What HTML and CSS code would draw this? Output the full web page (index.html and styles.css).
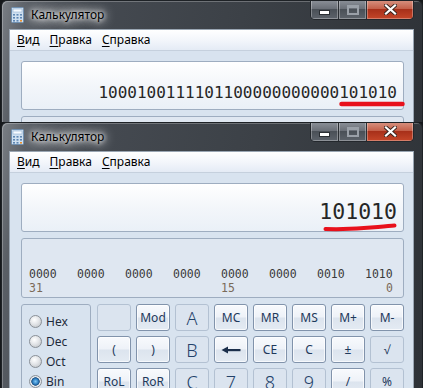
FILE: index.html
```html
<!DOCTYPE html>
<html lang="ru">
<head>
  <meta charset="UTF-8" />
  <title>Калькулятор</title>
  <link rel="stylesheet" href="styles.css">
</head>
<body>
  <div class="screen">
    <!-- back window: long binary value -->
    <div class="window window-back">
      <div class="titlebar">
        <svg class="app-icon" width="13" height="16" viewBox="0 0 13 16">
          <rect x="0.5" y="0.5" width="12" height="15" rx="1" fill="#cfe0f0" stroke="#6f8fb0"/>
          <rect x="2" y="2" width="9" height="3" fill="#f7fbff" stroke="#8fb0cf" stroke-width="0.6"/>
          <g fill="#5d86b3">
            <rect x="2" y="7" width="2" height="1.6"/><rect x="5.5" y="7" width="2" height="1.6"/><rect x="9" y="7" width="2" height="1.6"/>
            <rect x="2" y="10" width="2" height="1.6"/><rect x="5.5" y="10" width="2" height="1.6"/><rect x="9" y="10" width="2" height="1.6"/>
            <rect x="2" y="13" width="2" height="1.6"/><rect x="5.5" y="13" width="2" height="1.6"/>
          </g>
          <rect x="9" y="13" width="2" height="1.6" fill="#e9902e"/>
        </svg>
        <span class="title">Калькулятор</span>
        <div class="controls">
          <span class="ctl ctl-min">
            <svg width="11" height="5" viewBox="0 0 11 5"><rect x="0.5" y="0.5" width="10" height="4" fill="#fff" stroke="#2a2e33"/></svg>
          </span>
          <span class="ctl ctl-max">
            <svg width="12" height="10" viewBox="0 0 12 10"><rect x="1" y="1" width="10" height="8" fill="none" stroke="#9aa0a8" stroke-width="2"/><rect x="1" y="1" width="10" height="2" fill="#9aa0a8"/></svg>
          </span>
          <span class="ctl ctl-close">
            <svg width="13" height="11" viewBox="0 0 13 11"><path d="M2 1.5 L11 9.5 M11 1.5 L2 9.5" stroke="#3a2620" stroke-width="4" stroke-linecap="square"/><path d="M2 1.5 L11 9.5 M11 1.5 L2 9.5" stroke="#fff" stroke-width="2.2" stroke-linecap="square"/></svg>
          </span>
        </div>
      </div>
      <div class="client">
        <div class="menubar">
          <span class="menu-item"><u>В</u>ид</span>
          <span class="menu-item"><u>П</u>равка</span>
          <span class="menu-item"><u>С</u>правка</span>
        </div>
        <div class="panel">
          <div class="display display-long">
            <span class="value">1000100111101100000000000101010</span>
            <svg class="mark mark-long" width="66" height="6" viewBox="0 0 66 6">
              <path d="M2.5 3 L63.5 3" stroke="#e8111c" stroke-width="4.5" stroke-linecap="round"/>
            </svg>
          </div>
          <div class="bits"></div>
        </div>
      </div>
    </div>

    <!-- front window: short binary value -->
    <div class="window window-front">
      <div class="titlebar">
        <svg class="app-icon" width="13" height="16" viewBox="0 0 13 16">
          <rect x="0.5" y="0.5" width="12" height="15" rx="1" fill="#cfe0f0" stroke="#6f8fb0"/>
          <rect x="2" y="2" width="9" height="3" fill="#f7fbff" stroke="#8fb0cf" stroke-width="0.6"/>
          <g fill="#5d86b3">
            <rect x="2" y="7" width="2" height="1.6"/><rect x="5.5" y="7" width="2" height="1.6"/><rect x="9" y="7" width="2" height="1.6"/>
            <rect x="2" y="10" width="2" height="1.6"/><rect x="5.5" y="10" width="2" height="1.6"/><rect x="9" y="10" width="2" height="1.6"/>
            <rect x="2" y="13" width="2" height="1.6"/><rect x="5.5" y="13" width="2" height="1.6"/>
          </g>
          <rect x="9" y="13" width="2" height="1.6" fill="#e9902e"/>
        </svg>
        <span class="title">Калькулятор</span>
        <div class="controls">
          <span class="ctl ctl-min">
            <svg width="11" height="5" viewBox="0 0 11 5"><rect x="0.5" y="0.5" width="10" height="4" fill="#fff" stroke="#2a2e33"/></svg>
          </span>
          <span class="ctl ctl-max">
            <svg width="12" height="10" viewBox="0 0 12 10"><rect x="1" y="1" width="10" height="8" fill="none" stroke="#9aa0a8" stroke-width="2"/><rect x="1" y="1" width="10" height="2" fill="#9aa0a8"/></svg>
          </span>
          <span class="ctl ctl-close">
            <svg width="13" height="11" viewBox="0 0 13 11"><path d="M2 1.5 L11 9.5 M11 1.5 L2 9.5" stroke="#3a2620" stroke-width="4" stroke-linecap="square"/><path d="M2 1.5 L11 9.5 M11 1.5 L2 9.5" stroke="#fff" stroke-width="2.2" stroke-linecap="square"/></svg>
          </span>
        </div>
      </div>
      <div class="client">
        <div class="menubar">
          <span class="menu-item"><u>В</u>ид</span>
          <span class="menu-item"><u>П</u>равка</span>
          <span class="menu-item"><u>С</u>правка</span>
        </div>
        <div class="panel">
          <div class="display display-short">
            <span class="value">101010</span>
            <svg class="mark mark-short" width="74" height="9" viewBox="0 0 74 9">
              <path d="M2.5 6 C 20 6.5, 40 5.5, 55 4 C 62 3.2, 68 2.6, 71.5 2.5" stroke="#e8111c" stroke-width="4" fill="none" stroke-linecap="round"/>
            </svg>
          </div>
          <div class="bits">
            <div class="bit-grid">
              <span>0000</span><span>0000</span><span>0000</span><span>0000</span>
              <span>0000</span><span>0000</span><span>0010</span><span>1010</span>
              <span class="pos">31</span><span></span><span></span><span></span>
              <span class="pos">15</span><span></span><span></span><span class="pos pos-end">0</span>
            </div>
          </div>
          <div class="keypad">
            <div class="radix">
              <label class="radio"><span class="dot"></span>Hex</label>
              <label class="radio"><span class="dot"></span>Dec</label>
              <label class="radio"><span class="dot"></span>Oct</label>
              <label class="radio checked"><span class="dot"></span>Bin</label>
            </div>
            <div class="keys">
              <span class="key off"></span>
              <span class="key">Mod</span>
              <span class="key off big">A</span>
              <span class="key">MC</span>
              <span class="key">MR</span>
              <span class="key">MS</span>
              <span class="key">M+</span>
              <span class="key">M-</span>

              <span class="key">(</span>
              <span class="key">)</span>
              <span class="key off big">B</span>
              <span class="key">
                <svg width="20" height="8" viewBox="0 0 20 8"><path d="M0.5 4 L7 0.5 L7 7.5 Z" fill="#1b2f4b"/><rect x="6" y="3" width="13.5" height="2.2" fill="#1b2f4b"/></svg>
              </span>
              <span class="key">CE</span>
              <span class="key">C</span>
              <span class="key">±</span>
              <span class="key off">√</span>

              <span class="key">RoL</span>
              <span class="key">RoR</span>
              <span class="key off big">C</span>
              <span class="key off big">7</span>
              <span class="key off big">8</span>
              <span class="key off big">9</span>
              <span class="key">/</span>
              <span class="key off">%</span>
            </div>
          </div>
        </div>
      </div>
    </div>
  </div>
</body>
</html>
```

FILE: styles.css
```css
/* Two overlapping Windows 7 calculator windows */
body {
  margin: 0;
  background: #15181b;
  font-family: "Noto Sans", "Open Sans", sans-serif;
}
.screen {
  width: 423px;
  height: 388px;
  overflow: hidden;
}
.window {
  position: relative;
  width: 422px;
  margin-left: 1px;
  padding: 0 8px 0 7px;
  box-sizing: border-box;
  border: 1px solid #1e2226;
  border-bottom: none;
  border-radius: 6px 6px 0 0;
  background: linear-gradient(100deg, #7a7f85 0, #5a5f66 6%, #454a51 20%, #3c4147 55%, #2e3237 100%);
  box-shadow: inset 1px 1px 0 rgba(255, 255, 255, 0.25);
}
.window-back {
  height: 122px;
  overflow: hidden;
}
.window-front {
  height: 266px;
  overflow: hidden;
}
.titlebar {
  display: flex;
  align-items: flex-start;
  height: 28px;
}
.app-icon {
  margin: 6px 0 0 2px;
}
.title {
  margin: 6px 0 0 7px;
  font-size: 12px;
  line-height: 16px;
  color: #000;
  text-shadow: 0 0 4px #fff, 0 0 8px #fff, 0 0 12px rgba(255, 255, 255, 0.9), 0 0 16px rgba(255, 255, 255, 0.6);
}
.controls {
  display: flex;
  margin-left: auto;
  margin-top: -1px;
  border: 1px solid #23272c;
  border-top: none;
  border-radius: 0 0 5px 5px;
  overflow: hidden;
  height: 19px;
}
.ctl {
  display: flex;
  align-items: center;
  justify-content: center;
  height: 19px;
  box-shadow: inset 0 0 0 1px rgba(255, 255, 255, 0.3);
}
.ctl-min, .ctl-max {
  width: 27px;
  background: linear-gradient(#8c9199 0, #6b7078 45%, #4a5057 50%, #5d636b 100%);
  border-right: 1px solid #2a2e33;
}
.ctl-min svg {
  margin-top: 6px;
}
.ctl-close {
  width: 46px;
  background: linear-gradient(#d89483 0, #c4614b 45%, #a8301a 50%, #c54629 100%);
}
.client {
  background: #d8e3ef;
  border: 1px solid #9aa6b3;
  border-bottom: none;
  height: 400px;
}
.menubar {
  display: flex;
  gap: 10px;
  height: 20px;
  padding-left: 7px;
  background: linear-gradient(#ffffff 0, #f3f6fb 50%, #e4ebf5 100%);
  border-bottom: 1px solid #c5d0dd;
  font-size: 12px;
  line-height: 20px;
  color: #000;
}
.menu-item u {
  text-decoration-thickness: 1px;
  text-underline-offset: 2px;
}
.panel {
  display: flex;
  flex-direction: column;
  gap: 6px;
  padding: 10px 9px 0 11px;
}
.display {
  position: relative;
  height: 49px;
  box-sizing: border-box;
  border: 1px solid #9eadc0;
  border-radius: 3px;
  background: linear-gradient(#ffffff 0, #f3f6fa 50%, #eaf0f7 100%);
  text-align: right;
  padding-right: 6px;
  font-family: "DejaVu Sans Mono", "Liberation Mono", monospace;
  color: #262626;
}
.display-long {
  padding-top: 21px;
  font-size: 16px;
  line-height: 20px;
}
.display-short {
  padding-top: 15px;
  font-size: 21.5px;
  line-height: 26px;
}
.mark {
  position: absolute;
  top: 39px;
}
.mark-long {
  left: 317px;
}
.mark-short {
  left: 301px;
  top: 39px;
}
.bits {
  height: 60px;
  box-sizing: border-box;
  border: 1px solid #9eadc0;
  border-radius: 3px;
  background: #dfe7f1;
  padding: 28px 0 0 7px;
}
.bit-grid {
  display: grid;
  grid-template-columns: repeat(7, 48px) 28px;
  font-family: "DejaVu Sans Mono", "Liberation Mono", monospace;
  font-size: 11.5px;
  line-height: 14px;
  color: #3a3a3a;
}
.pos {
  color: #7a6a58;
}
.pos-end {
  justify-self: end;
}
.keypad {
  display: flex;
  gap: 6px;
}
.radix {
  width: 72px;
  height: 100px;
  box-sizing: border-box;
  border: 1px solid #9eadc0;
  border-radius: 3px;
  padding-top: 6px;
}
.radio {
  display: flex;
  align-items: center;
  gap: 4px;
  height: 20px;
  padding-left: 7px;
  font-size: 12px;
  color: #1e2a3a;
}
.dot {
  width: 11px;
  height: 11px;
  border-radius: 50%;
  border: 1px solid #8a9097;
  background: radial-gradient(circle at 40% 35%, #ffffff 0, #e3e5e8 45%, #b9bdc2 100%);
}
.radio.checked .dot {
  background: radial-gradient(circle, #7fc7f5 0, #2f7fc2 35%, #1d4f80 50%, #eef1f4 58%, #c5c9ce 100%);
}
.keys {
  display: grid;
  grid-template-columns: repeat(8, 34px);
  grid-auto-rows: 27px;
  gap: 5px;
}
.key {
  display: flex;
  align-items: center;
  justify-content: center;
  box-sizing: border-box;
  border: 1px solid #8193ab;
  border-radius: 3px;
  background: linear-gradient(#f8fafd 0, #eef2f8 48%, #dce4ee 52%, #e4ebf3 100%);
  box-shadow: inset 0 0 0 1px rgba(255, 255, 255, 0.7);
  font-size: 12px;
  color: #1e395b;
}
.key.off {
  border-color: #b3c1d2;
  background: #dbe4ef;
  box-shadow: none;
}
.key.big {
  font-size: 18px;
  font-weight: 300;
  color: #23426a;
}
```
